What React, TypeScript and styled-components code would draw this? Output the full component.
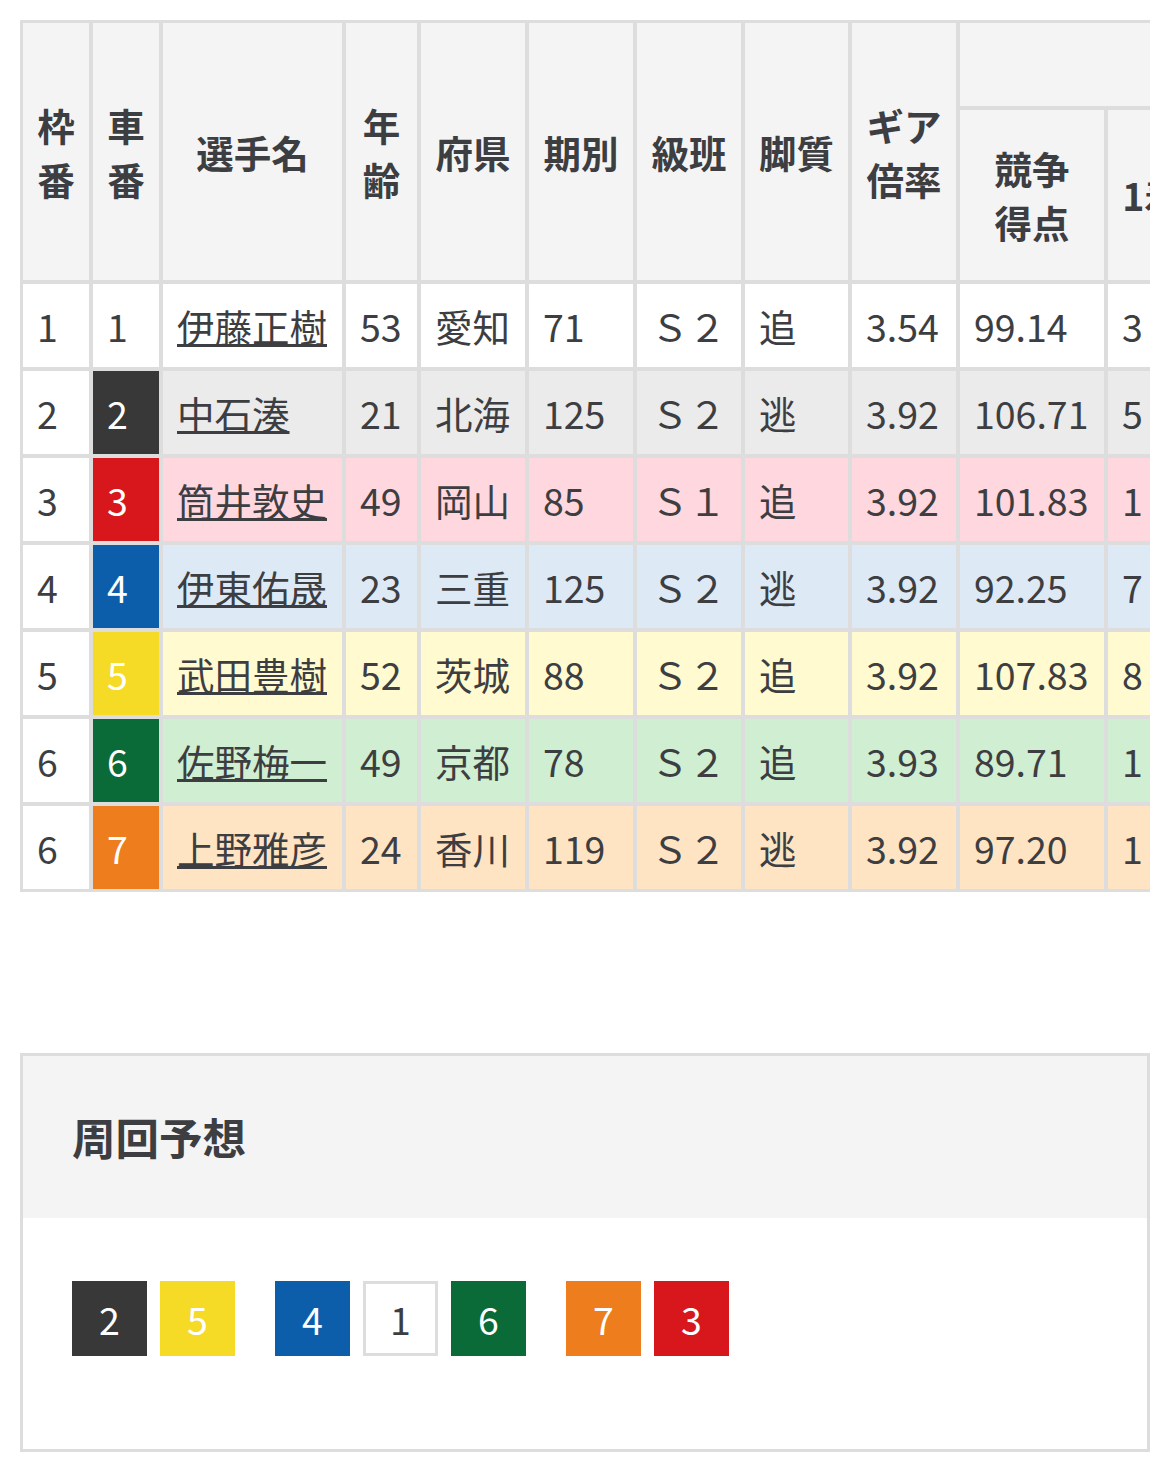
import React from 'react';
import styled, { createGlobalStyle } from 'styled-components';

const GlobalStyle = createGlobalStyle`
  body {
    margin: 0;
    background: #fff;
    font-family: "Noto Sans CJK JP", "Noto Sans", sans-serif;
    color: #3d3e42;
  }
`;

const CAR_COLORS: Record<number, string> = {
  1: '#ffffff',
  2: '#383838',
  3: '#d7171b',
  4: '#0c5eab',
  5: '#f5db25',
  6: '#0a6a38',
  7: '#ee7d1d',
};

const ROW_COLORS: Record<number, string> = {
  1: '#ffffff',
  2: '#ebebeb',
  3: '#ffd7df',
  4: '#ddeaf6',
  5: '#fffad0',
  6: '#d0eed1',
  7: '#ffe4c4',
};

const COLS = [70, 70, 183, 75, 108, 108, 108, 107, 108, 148, 92, 92, 92, 100, 120, 150, 150];

const Page = styled.div`
  display: flex;
  flex-direction: column;
  padding: 20px 20px 6px;
`;

const TableScroll = styled.div`
  width: 1130px;
  overflow: hidden;
`;

const Table = styled.table<{ $width: number }>`
  width: ${p => p.$width}px;
  table-layout: fixed;
  border-collapse: separate;
  border-spacing: 0;
  border: 1px solid #ddd;
  font-size: 37.5px;
  line-height: 54px;
`;

const Col = styled.col<{ $w: number }>`
  width: ${p => p.$w}px;
`;

const HeadRow = styled.tr<{ $h: number }>`
  height: ${p => p.$h}px;
`;

const BodyRow = styled.tr`
  height: 87px;
`;

const HeadCell = styled.th`
  box-sizing: border-box;
  background: #f4f4f4;
  border: 2px solid #ddd;
  padding: 0 8px;
  font-weight: 700;
  text-align: center;
  vertical-align: middle;
  white-space: nowrap;
  overflow: hidden;
`;

const Cell = styled.td<{ $bg: string }>`
  box-sizing: border-box;
  background: ${p => p.$bg};
  border: 2px solid #ddd;
  padding: 0 14px;
  vertical-align: middle;
  white-space: nowrap;
  overflow: hidden;
`;

const CarCell = styled(Cell)<{ $car: number }>`
  color: ${p => (p.$car === 1 ? '#3d3e42' : '#ffffff')};
`;

const NameLink = styled.a`
  color: inherit;
  text-decoration: underline;
  text-decoration-thickness: 3px;
`;

const Box = styled.section`
  margin-top: 161px;
  border: 3px solid #ddd;
`;

const BoxHead = styled.h2`
  margin: 0;
  padding: 48px 48px 48px 49px;
  background: #f4f4f4;
  font-size: 43.5px;
  line-height: 66px;
  font-weight: 700;
`;

const BoxBody = styled.div`
  display: flex;
  gap: 40px;
  padding: 63px 49px 93px;
`;

const ChipGroup = styled.div`
  display: flex;
  gap: 13px;
`;

const Chip = styled.span<{ $car: number }>`
  box-sizing: border-box;
  width: 75px;
  height: 75px;
  display: flex;
  align-items: center;
  justify-content: center;
  font-size: 37.5px;
  background: ${p => CAR_COLORS[p.$car]};
  color: ${p => (p.$car === 1 ? '#3d3e42' : '#ffffff')};
  border: ${p => (p.$car === 1 ? '3px solid #ddd' : 'none')};
`;

interface Racer {
  frame: number;
  car: number;
  name: string;
  age: number;
  pref: string;
  term: number;
  cls: string;
  leg: string;
  gear: string;
  score: string;
  results: string[];
}

const racers: Racer[] = [
  { frame: 1, car: 1, name: '伊藤正樹', age: 53, pref: '愛知', term: 71, cls: 'Ｓ２', leg: '追', gear: '3.54', score: '99.14', results: ['3', '4', '2', '9', '16.6%', '38.8%', '50.0%'] },
  { frame: 2, car: 2, name: '中石湊', age: 21, pref: '北海', term: 125, cls: 'Ｓ２', leg: '逃', gear: '3.92', score: '106.71', results: ['5', '3', '2', '6', '31.2%', '50.0%', '62.5%'] },
  { frame: 3, car: 3, name: '筒井敦史', age: 49, pref: '岡山', term: 85, cls: 'Ｓ１', leg: '追', gear: '3.92', score: '101.83', results: ['1', '2', '3', '9', '6.6%', '20.0%', '40.0%'] },
  { frame: 4, car: 4, name: '伊東佑晟', age: 23, pref: '三重', term: 125, cls: 'Ｓ２', leg: '逃', gear: '3.92', score: '92.25', results: ['7', '2', '1', '5', '46.6%', '60.0%', '66.6%'] },
  { frame: 5, car: 5, name: '武田豊樹', age: 52, pref: '茨城', term: 88, cls: 'Ｓ２', leg: '追', gear: '3.92', score: '107.83', results: ['8', '3', '2', '3', '50.0%', '68.7%', '81.2%'] },
  { frame: 6, car: 6, name: '佐野梅一', age: 49, pref: '京都', term: 78, cls: 'Ｓ２', leg: '追', gear: '3.93', score: '89.71', results: ['1', '1', '2', '11', '6.6%', '13.3%', '26.6%'] },
  { frame: 6, car: 7, name: '上野雅彦', age: 24, pref: '香川', term: 119, cls: 'Ｓ２', leg: '逃', gear: '3.92', score: '97.20', results: ['1', '4', '3', '8', '6.2%', '31.2%', '50.0%'] },
];

const lapGroups = [[2, 5], [4, 1, 6], [7, 3]];

export default function App() {
  const tableWidth = COLS.reduce((a, b) => a + b, 0) + 2;
  return (
    <>
      <GlobalStyle />
      <Page>
        <TableScroll>
          <Table $width={tableWidth}>
            <colgroup>
              {COLS.map((w, i) => (
                <Col key={i} $w={w} />
              ))}
            </colgroup>
            <thead>
              <HeadRow $h={87}>
                <HeadCell rowSpan={2}>枠<br />番</HeadCell>
                <HeadCell rowSpan={2}>車<br />番</HeadCell>
                <HeadCell rowSpan={2}>選手名</HeadCell>
                <HeadCell rowSpan={2}>年<br />齢</HeadCell>
                <HeadCell rowSpan={2}>府県</HeadCell>
                <HeadCell rowSpan={2}>期別</HeadCell>
                <HeadCell rowSpan={2}>級班</HeadCell>
                <HeadCell rowSpan={2}>脚質</HeadCell>
                <HeadCell rowSpan={2}>ギア<br />倍率</HeadCell>
                <HeadCell colSpan={8}>直近4ヶ月の成績</HeadCell>
              </HeadRow>
              <HeadRow $h={174}>
                <HeadCell>競争<br />得点</HeadCell>
                <HeadCell>1着</HeadCell>
                <HeadCell>2着</HeadCell>
                <HeadCell>3着</HeadCell>
                <HeadCell>着外</HeadCell>
                <HeadCell>勝率</HeadCell>
                <HeadCell>2連<br />対率</HeadCell>
                <HeadCell>3連<br />対率</HeadCell>
              </HeadRow>
            </thead>
            <tbody>
              {racers.map(r => {
                const bg = ROW_COLORS[r.car];
                return (
                  <BodyRow key={r.car}>
                    <Cell $bg="#ffffff">{r.frame}</Cell>
                    <CarCell $bg={CAR_COLORS[r.car]} $car={r.car}>{r.car}</CarCell>
                    <Cell $bg={bg}><NameLink href="#">{r.name}</NameLink></Cell>
                    <Cell $bg={bg}>{r.age}</Cell>
                    <Cell $bg={bg}>{r.pref}</Cell>
                    <Cell $bg={bg}>{r.term}</Cell>
                    <Cell $bg={bg}>{r.cls}</Cell>
                    <Cell $bg={bg}>{r.leg}</Cell>
                    <Cell $bg={bg}>{r.gear}</Cell>
                    <Cell $bg={bg}>{r.score}</Cell>
                    {r.results.map((v, i) => (
                      <Cell key={i} $bg={bg}>{v}</Cell>
                    ))}
                  </BodyRow>
                );
              })}
            </tbody>
          </Table>
        </TableScroll>

        <Box>
          <BoxHead>周回予想</BoxHead>
          <BoxBody>
            {lapGroups.map((g, gi) => (
              <ChipGroup key={gi}>
                {g.map(c => (
                  <Chip key={c} $car={c}>{c}</Chip>
                ))}
              </ChipGroup>
            ))}
          </BoxBody>
        </Box>
      </Page>
    </>
  );
}
